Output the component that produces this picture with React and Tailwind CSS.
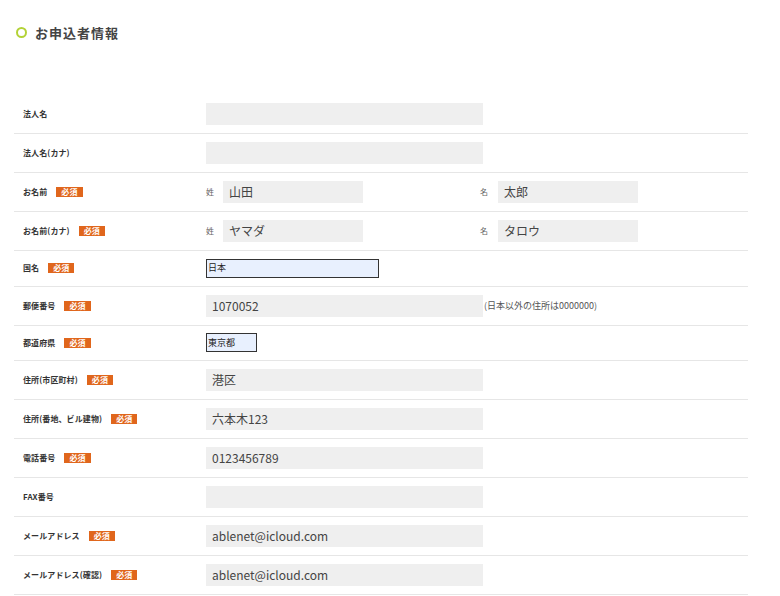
import React from 'react';

const Badge = () => (
  <span className="ml-[9px] inline-flex h-[10px] items-center bg-[#e0661c] px-[5px] text-[8px] font-bold leading-none text-white">
    必須
  </span>
);

const TextBox = ({ value = '', className = 'w-[277px]' }) => (
  <div className={`flex h-[22px] items-center bg-[#efefef] pl-[6px] text-[12px] text-[#444] ${className}`}>
    {value}
  </div>
);

const SelectBox = ({ value, className }) => (
  <div className={`flex h-[19px] items-center border border-[#333] bg-[#e8f0fe] pl-[1px] text-[9px] text-[#222] ${className}`}>
    {value}
  </div>
);

const Row = ({ label, required, height = 'h-[39px]', children }) => (
  <div className={`flex items-center border-b border-[#e6e6e6] ${height}`}>
    <div className="flex w-[192px] items-center pl-[9px] text-[8px] font-bold tracking-[0.1px] text-[#333]">
      <span>{label}</span>
      {required && <Badge />}
    </div>
    <div className="flex flex-1 items-center">{children}</div>
  </div>
);

const NamePair = ({ sei, mei }) => (
  <>
    <span className="w-[17px] text-[8px] text-[#666]">姓</span>
    <TextBox value={sei} className="w-[140px]" />
    <span className="ml-[117px] w-[18px] text-[8px] text-[#666]">名</span>
    <TextBox value={mei} className="w-[140px]" />
  </>
);

export default function App() {
  return (
    <div
      className="h-[596px] w-[780px] overflow-hidden bg-white"
      style={{ fontFamily: '"Noto Sans CJK JP", "Noto Sans", sans-serif' }}
    >
      <div className="flex items-center pl-[16px] pt-[23px]">
        <span className="h-[11px] w-[11px] rounded-full border-[2.5px] border-[#b3d236]" />
        <h2 className="ml-[8px] text-[13px] font-bold tracking-[1px] text-[#444]">お申込者情報</h2>
      </div>

      <div className="ml-[14px] mt-[52px] w-[734px]">
        <Row label="法人名">
          <TextBox />
        </Row>
        <Row label="法人名(カナ)">
          <TextBox />
        </Row>
        <Row label="お名前" required>
          <NamePair sei="山田" mei="太郎" />
        </Row>
        <Row label="お名前(カナ)" required>
          <NamePair sei="ヤマダ" mei="タロウ" />
        </Row>
        <Row label="国名" required height="h-[36px]">
          <SelectBox value="日本" className="w-[173px]" />
        </Row>
        <Row label="郵便番号" required>
          <TextBox value="1070052" />
          <span className="ml-[1px] text-[9px] text-[#555]">(日本以外の住所は0000000)</span>
        </Row>
        <Row label="都道府県" required height="h-[35px]">
          <SelectBox value="東京都" className="w-[51px]" />
        </Row>
        <Row label="住所(市区町村)" required>
          <TextBox value="港区" />
        </Row>
        <Row label="住所(番地、ビル建物)" required>
          <TextBox value="六本木123" />
        </Row>
        <Row label="電話番号" required>
          <TextBox value="0123456789" />
        </Row>
        <Row label="FAX番号">
          <TextBox />
        </Row>
        <Row label="メールアドレス" required>
          <TextBox value="ablenet@icloud.com" />
        </Row>
        <Row label="メールアドレス(確認)" required>
          <TextBox value="ablenet@icloud.com" />
        </Row>
      </div>
    </div>
  );
}
